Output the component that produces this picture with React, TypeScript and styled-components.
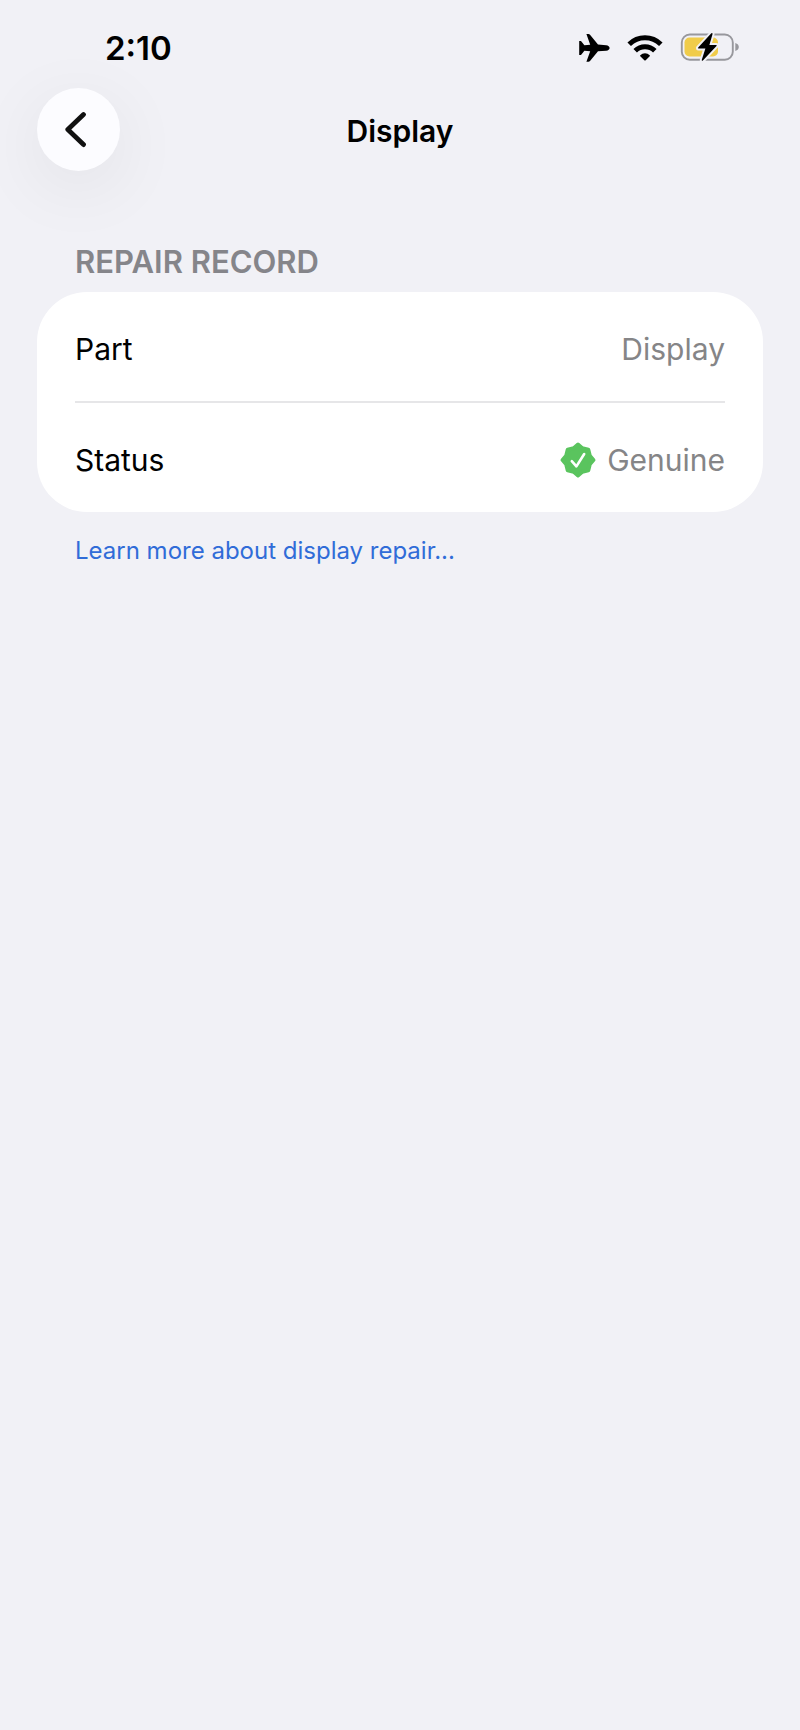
import React from "react";
import styled, { createGlobalStyle } from "styled-components";

const GlobalStyle = createGlobalStyle`
  *, *::before, *::after { box-sizing: border-box; }
  body {
    margin: 0;
    background: #f1f1f6;
    color: #000;
    font-family: Inter, "Liberation Sans", sans-serif;
    font-size: 30px;
    line-height: 40px;
  }
`;

const Screen = styled.div`
  min-height: 100vh;
  display: flex;
  flex-direction: column;
`;

const StatusBar = styled.div`
  display: flex;
  align-items: center;
  justify-content: space-between;
  height: 88px;
  padding: 7px 61px 0 105px;
`;

const Time = styled.time`
  font-size: 33px;
  font-weight: 600;
`;

const Indicators = styled.div`
  display: flex;
  align-items: center;
  gap: 17px;

  svg { display: block; overflow: visible; }
`;

const NavBar = styled.header`
  display: grid;
  grid-template-columns: 83px 1fr 83px;
  align-items: center;
  padding: 0 37px;
`;

const BackButton = styled.button`
  display: flex;
  align-items: center;
  justify-content: center;
  width: 83px;
  height: 83px;
  padding: 0;
  border: 0;
  border-radius: 50%;
  background: #fcfcff;
  color: #111;
  box-shadow: 0 16px 72px rgba(0, 0, 0, 0.07);
  cursor: pointer;
`;

const Title = styled.h1`
  margin: 0;
  padding-top: 3px;
  text-align: center;
  font-size: 30px;
  font-weight: 600;
`;

const Section = styled.main`
  padding: 71px 37px 40px;
`;

const SectionTitle = styled.h2`
  margin: 0;
  padding: 0 38px 10px;
  color: #85858a;
  font-size: 31px;
  font-weight: 600;
`;

const Card = styled.dl`
  margin: 0;
  padding: 0 38px;
  border-radius: 50px;
  background: #fff;
`;

const Row = styled.div`
  display: flex;
  align-items: center;
  justify-content: space-between;
  padding: 37px 0 32px;

  & + & { border-top: 2px solid #e6e6e8; }
`;

const Label = styled.dt``;

const Value = styled.dd`
  display: flex;
  align-items: center;
  gap: 11px;
  margin: 0;
  color: #858587;
`;

const LearnMore = styled.a`
  display: inline-block;
  margin: 22px 38px 0;
  color: #306cd8;
  font-size: 24px;
  line-height: 34px;
  text-decoration: none;
`;

const AirplaneIcon = () => (
  <svg width="31" height="28" viewBox="0 0 31 28" aria-label="Airplane mode" role="img">
    <path
      d="M27.2 11.2c2 .2 3.400 1.500 3.400 2.800s-1.400 2.600-3.400 2.800l-8.200.4-8 9.800c-.4.600-.9.800-1.500.8H7.400l3.800-10.600-5.800-.5-3 3.800c-.3.400-.6.500-1 .5H.2V7h1.200c.4 0 .7.100 1 .5l3 3.800 5.800-.5L7.400 0h2.100c.6 0 1.100.2 1.500.8l8 9.800z"
      fill="#000"
    />
  </svg>
);

const WifiIcon = () => (
  <svg width="36" height="26" viewBox="0 0 36 26" aria-label="Wi-Fi" role="img">
    <g fill="none" stroke="#000" strokeWidth="5">
      <path d="M2.200 9.200a22.400 22.400 0 0 1 31.600 0" />
      <path d="M8.200 15.700a14 14 0 0 1 19.600 0" />
    </g>
    <path d="M13.300 20.200a6.700 6.700 0 0 1 9.400 0q.5.500 0 1l-4 4q-.7.700-1.400 0l-4-4q-.5-.5 0-1z" fill="#000" />
  </svg>
);

const BatteryIcon = () => (
  <svg width="59" height="30" viewBox="0 0 59 30" aria-label="Battery charging" role="img">
    <rect x="1.800" y="1.500" width="51" height="25.200" rx="8" fill="none" stroke="#98989d" strokeWidth="1.900" />
    <path d="M55.300 10c2.300.7 3.500 2.100 3.500 4s-1.200 3.300-3.500 4z" fill="#98989d" />
    <rect x="4.500" y="4.500" width="33.500" height="19" rx="5" fill="#f0cc4a" />
    <path
      d="M31.300.3 18.200 14.600q-.8 1 .5 1h6.700L21.800 26.800q-.3 1.600 1.100.8L36.500 13q.8-1.100-.5-1.100h-6.600L32.500 1.200q.2-1.800-1.200-.9z"
      fill="#000"
      stroke="#f1f1f6"
      strokeWidth="4"
      strokeLinejoin="round"
      paintOrder="stroke"
    />
  </svg>
);

const ChevronIcon = () => (
  <svg width="27" height="38" viewBox="0 0 27 38" aria-hidden="true">
    <path d="M18.500 3.600 2.800 18.600 18.500 33.600" fill="none" stroke="currentColor" strokeWidth="4.800" strokeLinecap="round" strokeLinejoin="round" />
  </svg>
);

const VerifiedIcon = () => (
  <svg width="36" height="36" viewBox="0 0 36 36" aria-hidden="true">
    <path
      d="M18 2.600 22.300 6.200 28.300 7.700 29.800 13.700 33.400 18 29.800 22.300 28.300 28.300 22.300 29.800 18 33.400 13.700 29.800 7.700 28.300 6.200 22.300 2.600 18 6.200 13.700 7.700 7.700 13.700 6.200z"
      fill="#5ac45e"
      stroke="#5ac45e"
      strokeWidth="4"
      strokeLinejoin="round"
    />
    <path d="m11.800 19.200 4.600 5.200 7.800-12.400" fill="none" stroke="#fff" strokeWidth="2.600" strokeLinecap="round" strokeLinejoin="round" />
  </svg>
);

export default function App() {
  return (
    <>
      <GlobalStyle />
      <Screen>
        <StatusBar>
          <Time>2:10</Time>
          <Indicators>
            <AirplaneIcon />
            <WifiIcon />
            <BatteryIcon />
          </Indicators>
        </StatusBar>
        <NavBar>
          <BackButton type="button" aria-label="Back">
            <ChevronIcon />
          </BackButton>
          <Title>Display</Title>
        </NavBar>
        <Section>
          <SectionTitle>REPAIR RECORD</SectionTitle>
          <Card>
            <Row>
              <Label>Part</Label>
              <Value>Display</Value>
            </Row>
            <Row>
              <Label>Status</Label>
              <Value>
                <VerifiedIcon />
                Genuine
              </Value>
            </Row>
          </Card>
          <LearnMore href="#display-repair">Learn more about display repair...</LearnMore>
        </Section>
      </Screen>
    </>
  );
}
